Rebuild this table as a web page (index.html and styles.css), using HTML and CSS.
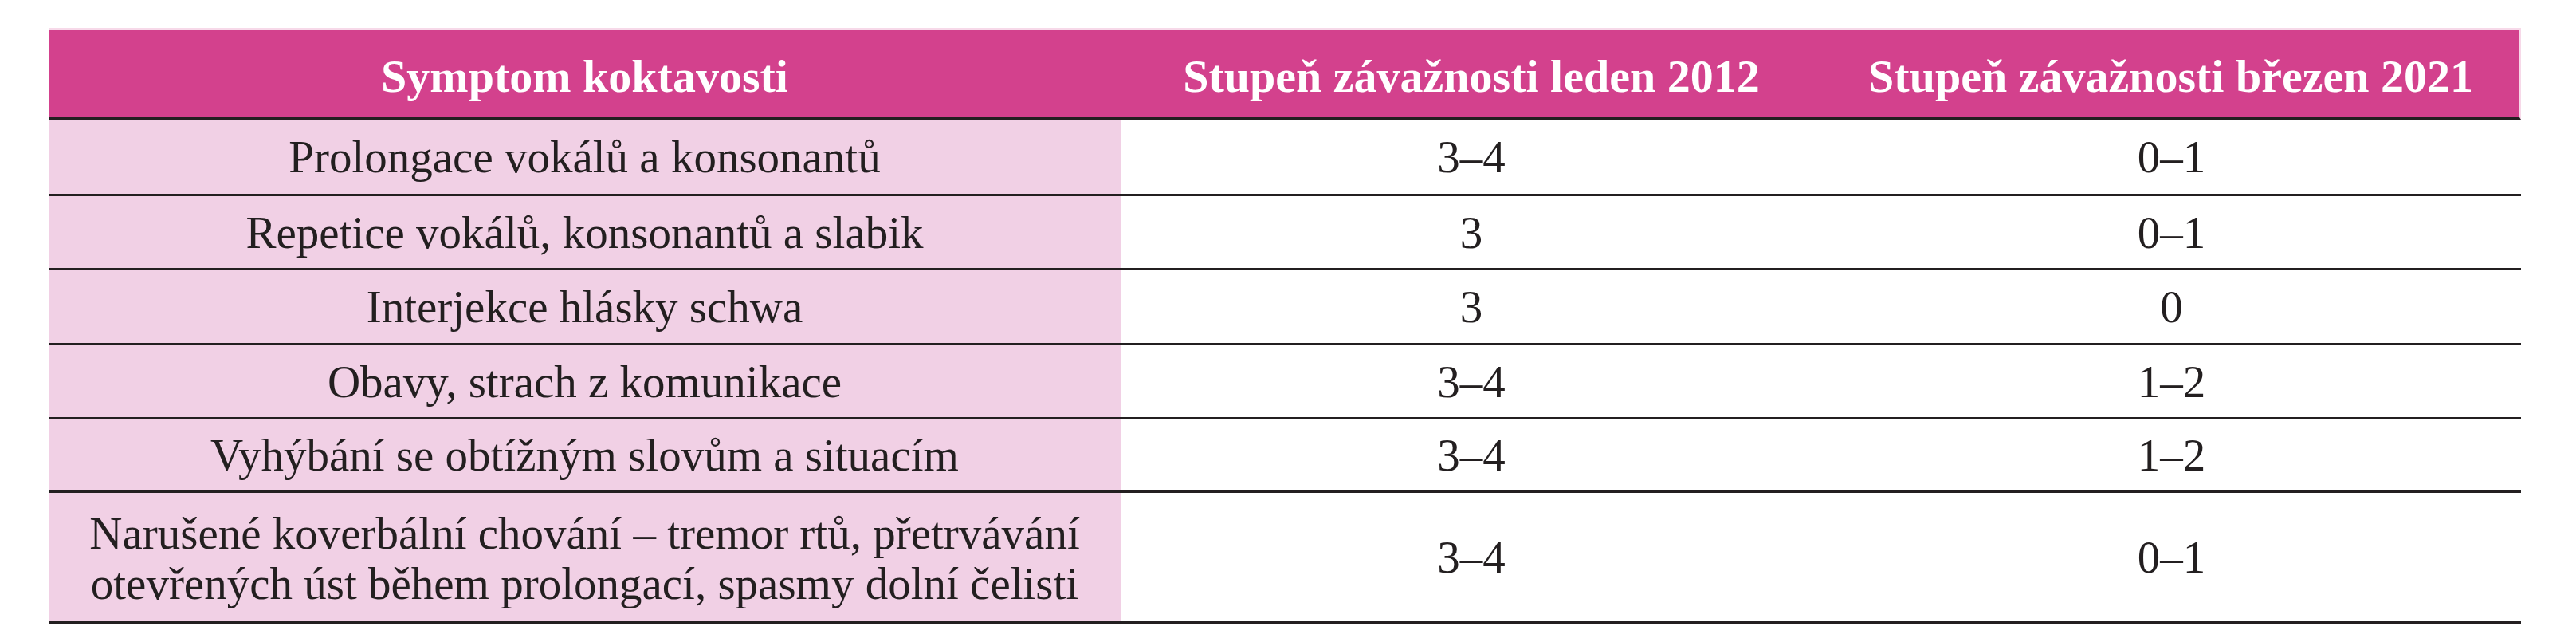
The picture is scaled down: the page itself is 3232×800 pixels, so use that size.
FILE: index.html
```html
<!DOCTYPE html>
<html lang="cs">
<head>
<meta charset="utf-8">
<title>Symptomy koktavosti</title>
<link rel="stylesheet" href="styles.css">
</head>
<body>
<div class="page">
  <div class="table">
    <div class="cell head">Symptom koktavosti</div>
    <div class="cell head">Stupeň závažnosti leden 2012</div>
    <div class="cell head last">Stupeň závažnosti březen 2021</div>

    <div class="cell sym r1">Prolongace vokálů a konsonantů</div>
    <div class="cell val r1">3–4</div>
    <div class="cell val r1">0–1</div>

    <div class="cell sym r2">Repetice vokálů, konsonantů a slabik</div>
    <div class="cell val r2">3</div>
    <div class="cell val r2">0–1</div>

    <div class="cell sym r3">Interjekce hlásky schwa</div>
    <div class="cell val r3">3</div>
    <div class="cell val r3">0</div>

    <div class="cell sym r4">Obavy, strach z komunikace</div>
    <div class="cell val r4">3–4</div>
    <div class="cell val r4">1–2</div>

    <div class="cell sym r5">Vyhýbání se obtížným slovům a situacím</div>
    <div class="cell val r5">3–4</div>
    <div class="cell val r5">1–2</div>

    <div class="cell sym r6 two">Narušené koverbální chování – tremor rtů, přetrvávání<br>otevřených úst během prolongací, spasmy dolní čelisti</div>
    <div class="cell val r6">3–4</div>
    <div class="cell val r6">0–1</div>
  </div>
</div>
</body>
</html>
```

FILE: styles.css
```css
html, body {
  margin: 0;
  padding: 0;
  background: #ffffff;
}

.page {
  width: 3232px;
  height: 800px;
  padding-top: 35px;
  padding-left: 61px;
  box-sizing: border-box;
}

.table {
  display: grid;
  grid-template-columns: 1345px 880px 877px;
  grid-template-rows: 115px 96px 93px 94px 93px 92px 164px;
  width: 3102px;
  font-family: "Liberation Serif", "Times New Roman", serif;
  color: #231f20;
}

.cell {
  box-sizing: border-box;
  display: flex;
  align-items: center;
  justify-content: center;
  text-align: center;
  white-space: nowrap;
  border-bottom: 3px solid #231f20;
}

.head {
  background: #d3418d;
  color: #ffffff;
  font-weight: bold;
  font-size: 58px;
  border-top: 3px solid #f7d9e9;
  padding-top: 5px;
}

.head.last {
  border-right: 2px solid #f7d9e9;
}

.sym {
  background: #f1d0e5;
  font-size: 57px;
  line-height: 63px;
}

.val {
  background: #ffffff;
  font-size: 57px;
  line-height: 63px;
}

.two {
  padding-top: 2px;
}
```
